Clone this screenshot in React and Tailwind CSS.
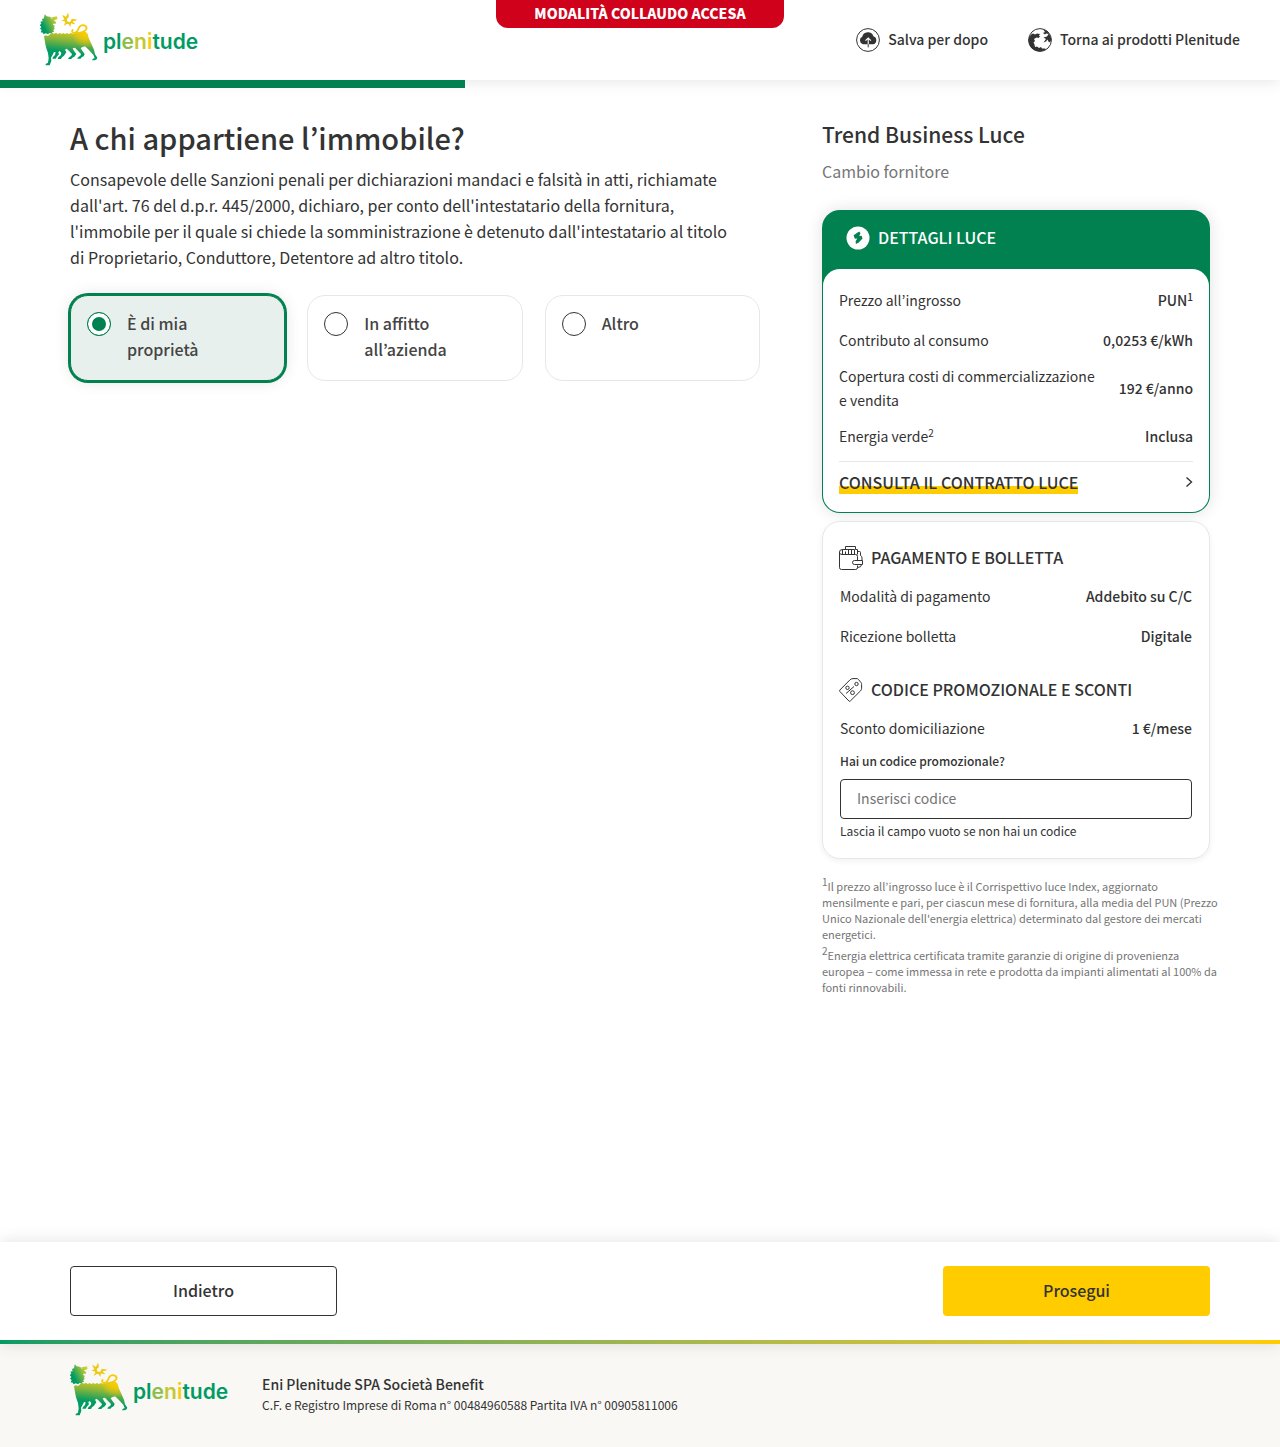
import { useId, useState } from "react";

function Logo() {
  const id = useId();
  return (
    <a href="#" aria-label="plenitude" className="flex w-40 items-start">
      <svg viewBox="12 16 174 159" className="h-[53px] w-[58px] shrink-0" aria-hidden="true">
        <defs>
          <linearGradient id={id + "b"} x1="100" y1="70" x2="92" y2="134" gradientUnits="userSpaceOnUse">
            <stop offset="0" stopColor="#d8cb1c" />
            <stop offset="0.45" stopColor="#86b53c" />
            <stop offset="1" stopColor="#009b64" />
          </linearGradient>
          <linearGradient id={id + "h"} x1="18" y1="60" x2="62" y2="36" gradientUnits="userSpaceOnUse">
            <stop offset="0.1" stopColor="#009b64" />
            <stop offset="1" stopColor="#d5cf2b" />
          </linearGradient>
          <radialGradient id={id + "y"} cx="150" cy="74" r="46" gradientUnits="userSpaceOnUse">
            <stop offset="0" stopColor="#ffcc00" />
            <stop offset="0.4" stopColor="#ffcc00" stopOpacity="0.7" />
            <stop offset="1" stopColor="#ffcc00" stopOpacity="0" />
          </radialGradient>
        </defs>
        <path
          fill={`url(#${id}h)`}
          d="M26 20L32 26L41 27L46 30L52 28L62 26L65 32L61 36L55 37L55 40L61 43L59 48L51 48L52 52L57 55L54 59L56 64L52 67L54 73L49 73L48 78L41 76L36 80L30 77L22 80L21 75L14 74L17 67L12 63L16 58L11 52L16 48L13 42L20 41L18 34L24 32Z"
        />
        <circle cx="48" cy="33" r="1.500" fill="#fff" />
        <path
          fill={`url(#${id}b)`}
          d="M24 85L30 83L36 85L44 78L50 75L54 78L60 75L65 79L71 76L76 79L82 76L87 79L93 76L98 79L105 76L110 78L117 76L124 74L134 72L146 71L154 78L158 92L166 108L174 126L177 140L184 150L182 155L176 158L168 158L170 154L176 151L172 141L158 126L147 116L138 119L134 122L140 131L146 139L143 146L137 149L134 153L124 153L126 149L133 144L135 139L124 128L117 120L110 122L114 130L121 139L115 147L109 150L106 154L96 154L98 150L106 144L108 139L97 128L92 123L87 126L91 134L84 144L78 149L75 154L65 154L67 149L74 143L76 136L71 130L67 134L69 140L62 148L59 153L49 153L51 148L57 142L59 134L54 133L50 141L45 150L46 160L41 173L29 173L29 169L36 165L38 152L36 136L30 119L27 104Z"
        />
        <path fill={`url(#${id}y)`} d="M98 79L105 76L110 78L117 76L124 74L134 72L146 71L154 78L158 92L166 108L170 118L98 116Z" />
        <path
          fill="none"
          stroke="#f8ca08"
          strokeWidth="5.500"
          strokeLinecap="round"
          d="M113 76C108 74 107 69 110 67M115 76C126 76 125 64 131 57C138 49 151 53 152 61C152 69 142 70 137 76"
        />
        <path fill="none" stroke="#edc912" strokeWidth="6.500" d="M95 27C87 31 87 42 95 45C102 48 108 44 109 37" />
        <path
          fill="#edc912"
          d="M98 30L90 28L96 15L98 22ZM92 30L86 36L78 22L86 25ZM90 34L90 43L76 38ZM90 41L97 46L83 55L87 46ZM95 44L104 44L104 58L99 52ZM103 45L108 39L118 50L111 49ZM106 40L107 33L124 36L117 40Z"
        />
      </svg>
      <span className="ml-[5px] mt-4 font-['Inter'] text-[21px]/[26px] font-semibold">
        <span className="text-[#009b64]">pl</span>
        <span className="text-[#8fbd4a]">e</span>
        <span className="text-[#c3c832]">n</span>
        <span className="text-[#f7cc0d]">i</span>
        <span className="text-[#009b64]">tude</span>
      </span>
    </a>
  );
}

const CloudIcon = () => (
  <svg viewBox="0 0 24 24" className="size-6" aria-hidden="true">
    <circle cx="12" cy="12" r="11.4" fill="none" stroke="#333" strokeWidth="1" />
    <path fill="#333" d="M7 16.300a4 4 0 0 1-.8-7.500A5.800 5.800 0 0 1 17.400 8.200a4.200 4.200 0 0 1-.4 8.100z" />
    <path fill="none" stroke="#fff" strokeWidth="1.100" d="M12.200 16.300v-6M9.500 12.700l2.700-2.700 2.700 2.700" />
    <path stroke="#333" strokeWidth="1" d="M12.200 16.300v3" />
  </svg>
);

const GlobeIcon = () => (
  <svg viewBox="0 0 24 24" className="size-6" aria-hidden="true">
    <circle cx="12" cy="12" r="11.400" fill="none" stroke="#333" strokeWidth="1" />
    <path
      fill="#333"
      d="M.6 12C.8 8.500 3 6 5 5.500L7 6.500L9 5.500L12 6L11 7.500L12 8.500L10.500 10L8.500 9.500L6 11L7 13L5.500 14.500L6.500 16.500L7 19L9 18.500L11 20L13 19L14 20.500L17 20.500L18 21.500C9 26.500 .2 21 .6 12Z"
    />
    <path
      fill="#333"
      d="M15 1.200L19 3L21.500 6.500L23.300 10.500L23 13L21 14.500L19.500 11.500L18 13.500L15.500 14.500L18 11L15.500 9.500L19 8.500L20.500 6L18 5.500L17 6.500L15 5L17 4Z"
    />
  </svg>
);

const BoltIcon = () => (
  <svg viewBox="0 0 24 24" className="size-6" aria-hidden="true">
    <circle cx="12" cy="12" r="11.500" fill="#fff" />
    <path fill="#00814f" d="M13.200 5.500L7.600 9.300L8.800 12.800L11.300 12.600L9.600 15.200L9.900 18L12.500 16.800L16.500 12.600L15.600 9.800L13.200 10L14.500 7.300Z" />
  </svg>
);

const WalletIcon = () => (
  <svg viewBox="0 0 24 24" className="size-6" fill="none" stroke="#333" strokeWidth="1" aria-hidden="true">
    <path d="M3 8.500h13.500q2 0 2 2v3.500M18.500 19.500v2q0 2-2 2H2.500q-2 0-2-2V6q0-2.500 3-2.500M.5 6.500q0 2 2.500 2" />
    <path d="M3.500 8.500v-5h12v5M6.500 3.500v-3h10v3h2v5M6.500 5.500v3M9.500 3.500v5M12.500 3.500v5M18.500 5.500h2q1 0 1 1v3q1.500.5 1.500 2.500v2.500" />
    <path d="M23.500 14.500h-8q-2 0-2 2t2 2h8zM22.500 18.500q0 3-4 3" />
  </svg>
);

const TagIcon = () => (
  <svg viewBox="0 0 24 24" className="size-6" fill="none" stroke="#333" strokeWidth="1" aria-hidden="true">
    <path d="M.9 12L11 1.800q1.200-1.200 3-1.200h4q.8 0 1.300.7l2.700 3.300q.6.700.6 1.700v4q0 1.500-1 2.500L11.300 23q-.7.700-1.400 0L.9 13.500q-.7-.7 0-1.500z" />
    <circle cx="17.500" cy="6" r="1.700" />
    <circle cx="8.500" cy="9.800" r="1.700" />
    <circle cx="13.500" cy="14.700" r="1.900" />
    <path d="M7 15.500l8-7" />
  </svg>
);

const NAV = [
  { label: "Salva per dopo", Icon: CloudIcon },
  { label: "Torna ai prodotti Plenitude", Icon: GlobeIcon },
];

const OPTIONS = ["È di mia proprietà", "In affitto all’azienda", "Altro"];

function Row({ label, value }) {
  return (
    <div className="flex items-center justify-between gap-4 pb-[7px] pt-[5px] text-[14px]/6">
      <dt>{label}</dt>
      <dd className="shrink-0 font-medium">{value}</dd>
    </div>
  );
}

const Sup = ({ children }) => <sup className="text-[10px]">{children}</sup>;

export default function App() {
  const [choice, setChoice] = useState(0);
  return (
    <div className="flex min-h-screen flex-col bg-white font-['Noto_Sans_CJK_JP','Noto_Sans_CJK_SC',sans-serif] text-[#333]" lang="it">
      <header className="relative z-10 bg-white shadow-[0_0_16px_rgba(0,0,0,0.12)]">
        <div className="flex h-20 items-start justify-between px-10">
          <div className="pt-[13px]">
            <Logo />
          </div>
          <nav className="flex h-20 items-center gap-10">
            {NAV.map(({ label, Icon }) => (
              <a key={label} href="#" className="flex items-start gap-2 text-[14px]/[22px] font-medium">
                <Icon />
                {label}
              </a>
            ))}
          </nav>
        </div>
        <div className="absolute left-1/2 top-0 flex h-7 w-72 -translate-x-1/2 items-center justify-center rounded-b-xl bg-[#d0021b] pb-0.5 text-[14px]/5 font-black text-white">
          MODALITÀ COLLAUDO ACCESA
        </div>
        <div className="absolute left-0 top-full h-2 w-[465px] bg-[#00814f]" />
      </header>

      <main className="mx-auto flex w-full max-w-[1140px] flex-1 items-start gap-[62px] pt-[39px]">
        <section className="min-w-0 flex-1">
          <h1 className="text-[29px]/[36px] font-medium">A chi appartiene l’immobile?</h1>
          <p className="mt-[11px] pr-6 text-[16px]/[26px]">
            Consapevole delle Sanzioni penali per dichiarazioni mandaci e falsità in atti, richiamate dall'art. 76 del
            d.p.r. 445/2000, dichiaro, per conto dell'intestatario della fornitura, l'immobile per il quale si chiede
            la somministrazione è detenuto dall'intestatario al titolo di Proprietario, Conduttore, Detentore ad altro
            titolo.
          </p>
          <div className="mt-[25px] grid grid-cols-3 gap-[22px]" role="radiogroup" aria-label="A chi appartiene l’immobile?">
            {OPTIONS.map((label, i) => (
              <label
                key={label}
                className="flex cursor-pointer items-start gap-4 rounded-[18px] border border-[#e7e7e7] px-4 pb-[18px] pt-3.5 text-[16px]/[26px] font-medium text-[#444] has-checked:border-[#00814f] has-checked:bg-[#e8f0ed] has-checked:shadow-[0_0_0_2px_#00814f,0_0_16px_rgba(0,0,0,0.12)]"
              >
                <input
                  type="radio"
                  name="owner"
                  checked={choice === i}
                  onChange={() => setChoice(i)}
                  className="mt-0.5 size-6 shrink-0 appearance-none rounded-full border border-[#333] bg-white checked:border-[#00814f] checked:bg-[#00814f] checked:shadow-[inset_0_0_0_4px_#fff]"
                />
                <span className="max-w-[100px]">{label}</span>
              </label>
            ))}
          </div>
        </section>

        <aside className="w-[388px] shrink-0">
          <h2 className="text-[21px]/[30px] font-medium">Trend Business Luce</h2>
          <p className="mt-[9px] text-[16px]/[26px] text-[#757575]">Cambio fornitore</p>

          <section className="mt-[26px] rounded-[18px] bg-[#00814f] px-px pb-px shadow-[0_0_16px_rgba(0,0,0,0.12)]">
            <h3 className="flex h-[59px] items-start gap-2 px-[23px] pt-4 text-[16px]/[22px] font-medium text-white">
              <BoltIcon />
              DETTAGLI LUCE
            </h3>
            <div className="rounded-[17px] bg-white px-4 pb-[18px] pt-3.5">
              <dl>
                <Row label="Prezzo all’ingrosso" value={<>PUN<Sup>1</Sup></>} />
                <div className="mt-1" />
                <Row label="Contributo al consumo" value="0,0253 €/kWh" />
                <Row label="Copertura costi di commercializzazione e vendita" value="192 €/anno" />
                <Row label={<>Energia verde<Sup>2</Sup></>} value="Inclusa" />
              </dl>
              <a href="#" className="mt-1.5 flex items-center justify-between border-t border-[#e7e7e7] pt-2 text-[16px]/6 font-medium">
                <span className="bg-linear-to-b from-transparent from-65% to-[#ffcc00] to-65%">CONSULTA IL CONTRATTO LUCE</span>
                <svg viewBox="0 0 8 12" className="h-3 w-2" fill="none" stroke="#333" strokeWidth="1.400" aria-hidden="true">
                  <path d="M1.500 1.500L6.500 6l-5 4.500" />
                </svg>
              </a>
            </div>
          </section>

          <section className="mt-2 rounded-[18px] border border-[#e7e7e7] bg-white px-4 pb-[17px] pt-6 shadow-[0_2px_6px_rgba(0,0,0,0.06)]">
            <h3 className="flex items-start gap-2 text-[16px]/[22px] font-medium">
              <WalletIcon />
              PAGAMENTO E BOLLETTA
            </h3>
            <dl className="mt-[9px] flex flex-col gap-1 px-px">
              <Row label="Modalità di pagamento" value="Addebito su C/C" />
              <Row label="Ricezione bolletta" value="Digitale" />
            </dl>
            <h3 className="mt-[23px] flex items-start gap-2 text-[16px]/[22px] font-medium">
              <TagIcon />
              CODICE PROMOZIONALE E SCONTI
            </h3>
            <dl className="mt-[9px] px-px">
              <Row label="Sconto domiciliazione" value="1 €/mese" />
            </dl>
            <div className="flex flex-col px-px">
              <label htmlFor="promo" className="mt-1 text-[12px]/5 font-medium">
                Hai un codice promozionale?
              </label>
              <input
                id="promo"
                type="text"
                placeholder="Inserisci codice"
                aria-describedby="promo-hint"
                className="mt-2 h-10 w-full rounded-[4px] border border-[#333] px-4 pb-0.5 text-[14px]/6 placeholder:text-[#757575]"
              />
              <p id="promo-hint" className="mt-0.5 text-[12px]/5">
                Lascia il campo vuoto se non hai un codice
              </p>
            </div>
          </section>

          <div className="-mr-2.5 mt-[19px] text-[11px]/4 text-[#757575]">
            <p>
              <Sup>1</Sup>Il prezzo all’ingrosso luce è il Corrispettivo luce Index, aggiornato mensilmente e pari, per
              ciascun mese di fornitura, alla media del PUN (Prezzo Unico Nazionale dell'energia elettrica) determinato
              dal gestore dei mercati energetici.
            </p>
            <p className="mt-[5px]">
              <Sup>2</Sup>Energia elettrica certificata tramite garanzie di origine di provenienza europea – come
              immessa in rete e prodotta da impianti alimentati al 100% da fonti rinnovabili.
            </p>
          </div>
        </aside>
      </main>

      <div className="relative bg-white shadow-[0_0_16px_rgba(0,0,0,0.12)]">
        <div className="mx-auto flex max-w-[1140px] justify-between py-6">
          <button type="button" className="h-[50px] w-[267px] rounded-[4px] border border-[#333] pb-[3px] text-[16px]/6 font-medium">
            Indietro
          </button>
          <button type="button" className="h-[50px] w-[267px] rounded-[4px] bg-[#ffcc00] pb-[3px] text-[16px]/6 font-medium">
            Prosegui
          </button>
        </div>
        <div className="h-1 bg-linear-to-r from-[#009b64] to-[#ffcc00]" />
      </div>
      <footer className="bg-[#f9f8f5]">
        <div className="mx-auto flex max-w-[1140px] items-start gap-8 pb-[31px] pt-[19px]">
          <Logo />
          <div className="pt-[11px]">
            <p className="text-[14px]/5 font-medium">Eni Plenitude SPA Società Benefit</p>
            <p className="text-[12px]/[22px]">C.F. e Registro Imprese di Roma n° 00484960588 Partita IVA n° 00905811006</p>
          </div>
        </div>
      </footer>
    </div>
  );
}
